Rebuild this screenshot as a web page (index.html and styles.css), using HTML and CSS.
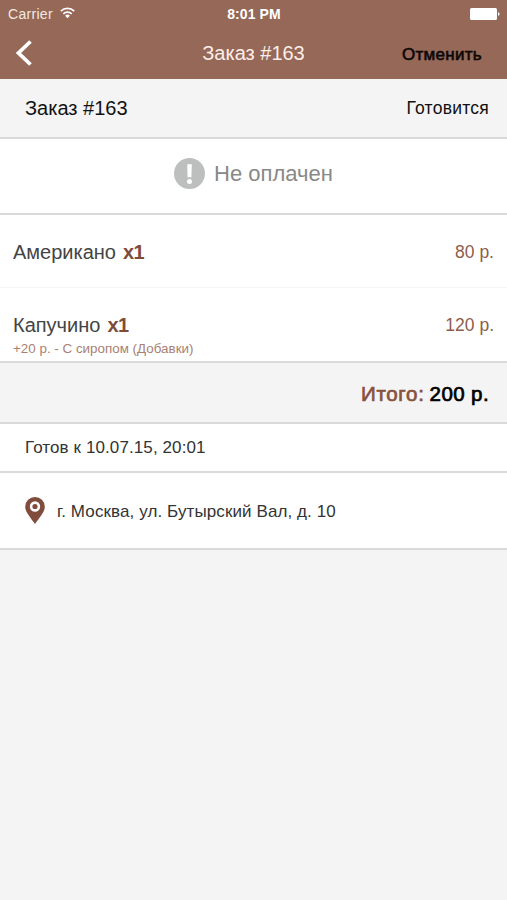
FILE: index.html
```html
<!DOCTYPE html>
<html lang="ru">
<head>
<meta charset="utf-8">
<title>Заказ #163</title>
<link rel="stylesheet" href="styles.css">
</head>
<body>
<header class="top">
  <div class="status">
    <div class="carrier"><span>Carrier</span>
      <svg class="wifi" width="15" height="12" viewBox="0 0 15 12"><g fill="none" stroke="#fff" stroke-width="1.7"><path d="M.8 4.1a9.6 9.6 0 0 1 13.4 0"/><path d="M3.3 6.8a6 6 0 0 1 8.4 0"/></g><path fill="#fff" d="M5.1 8.7a3.4 3.4 0 0 1 4.8 0L7.5 11.2z"/></svg>
    </div>
    <span class="clock">8:01 PM</span>
    <svg class="battery" width="30" height="12" viewBox="0 0 30 12"><rect width="27" height="12" rx="1.5" fill="#fff"/><path fill="#fff" d="M28 4.2q1.6.3 1.6 1.8T28 7.8z"/></svg>
  </div>
  <nav class="nav">
    <svg class="back" width="18" height="26" viewBox="0 0 18 26"><path d="M15.5 1.500 3.500 13l12 11.500" fill="none" stroke="#fff" stroke-width="3.8"/></svg>
    <h1 class="title">Заказ #163</h1>
    <span class="cancel">Отменить</span>
  </nav>
</header>
<main>
  <section class="row summary"><span class="number">Заказ #163</span><span class="state">Готовится</span></section>
  <section class="row payment">
    <svg width="31" height="31" viewBox="0 0 31 31"><circle cx="15.5" cy="15.5" r="15.5" fill="#bdbfbf"/><path fill="#fff" d="M13.200 6.300h4.600l-.4 12.900h-3.800z"/><circle cx="15.5" cy="23.4" r="2.5" fill="#fff"/></svg>
    <span class="unpaid">Не оплачен</span>
  </section>
  <section class="items">
    <div class="item"><div class="line"><span class="name">Американо</span><b class="qty">x1</b><span class="price">80 р.</span></div></div>
    <div class="item"><div class="line"><span class="name">Капучино</span><b class="qty">x1</b><span class="price">120 р.</span></div><div class="extra">+20 р. - С сиропом (Добавки)</div></div>
  </section>
  <section class="row total"><span class="label">Итого:</span><span class="sum">200 р.</span></section>
  <section class="row ready"><span>Готов к 10.07.15, 20:01</span></section>
  <section class="row address">
    <svg width="20" height="27" viewBox="0 0 20 27"><path fill="#804c3c" d="M10 0a9.8 9.8 0 0 1 9.8 9.8C19.8 15 14.500 20.500 10 27 5.500 20.500.2 15 .2 9.800A9.800 9.800 0 0 1 10 0z"/><circle cx="10" cy="9.500" r="3.900" fill="none" stroke="#fff" stroke-width="2.600"/></svg>
    <span class="street">г. Москва, ул. Бутырский Вал, д. 10</span>
  </section>
</main>
</body>
</html>
```
FILE: styles.css
```css
* { box-sizing: border-box; }
body {
  margin: 0;
  min-height: 900px;
  background: #f4f4f4;
  color: #333;
  font-family: "Liberation Sans", Arial, sans-serif;
  white-space: nowrap;
}
svg { display: block; flex: none; }
.top { height: 79px; background: #956857; color: #fff; }
.status {
  height: 27px;
  display: grid;
  grid-template-columns: 1fr auto 1fr;
  align-items: center;
  padding: 0 7px 0 8px;
  font-size: 14px;
}
.carrier { display: flex; gap: 7px; align-items: center; }
.carrier span { color: #f6e8e2; letter-spacing: .3px; }
.wifi { margin-top: -1px; }
.clock { font-weight: bold; font-size: 14px; letter-spacing: .1px; }
.battery { justify-self: end; }
.nav {
  height: 52px;
  display: grid;
  grid-template-columns: 1fr auto 1fr;
  align-items: center;
  padding: 0 15px;
}
.title { margin: 0; font-size: 20px; font-weight: normal; color: #fdeee8; }
.cancel {
  justify-self: end;
  margin-right: 10px;
  padding-top: 3px;
  color: #0c0604;
  font-size: 17px;
  letter-spacing: .3px;
  -webkit-text-stroke: .6px;
}
.row { display: flex; align-items: center; border-bottom: 2px solid #dadada; background: #fff; }
.summary { height: 60px; justify-content: space-between; padding: 0 18px 0 25px; background: #f4f4f4; color: #111; }
.number { font-size: 20px; }
.state { font-size: 17.5px; letter-spacing: .25px; }
.payment { height: 76px; padding: 0 0 6px 174px; gap: 9px; }
.unpaid { font-size: 22px; color: #888; padding-top: 2px; }
.items { height: 148px; background: #fff; border-bottom: 2px solid #dadada; }
.item { height: 72px; padding: 25px 13px 0; }
.item + .item { height: 74px; border-top: 1px solid #f5f5f5; }
.line { display: flex; align-items: center; height: 25px; }
.name { font-size: 20px; color: #444; }
.qty { font-size: 20px; color: #804c3a; margin-left: 7px; letter-spacing: -.5px; }
.price { margin-left: auto; font-size: 17.5px; color: #8d5d4c; }
.extra { font-size: 13.4px; line-height: 22px; color: #a97f72; }
.total {
  height: 61px;
  justify-content: flex-end;
  padding: 2px 18px 0 0;
  gap: 5px;
  background: #f4f4f4;
  font-size: 20.5px;
  letter-spacing: .4px;
  -webkit-text-stroke: .7px;
}
.label { color: #87513d; letter-spacing: .7px; }
.sum { color: #000; }
.ready { height: 49px; padding-left: 25px; font-size: 17px; letter-spacing: .1px; }
.address { height: 77px; padding-left: 25px; gap: 12px; font-size: 17px; letter-spacing: .1px; }
.street { padding-top: 2px; }
```
